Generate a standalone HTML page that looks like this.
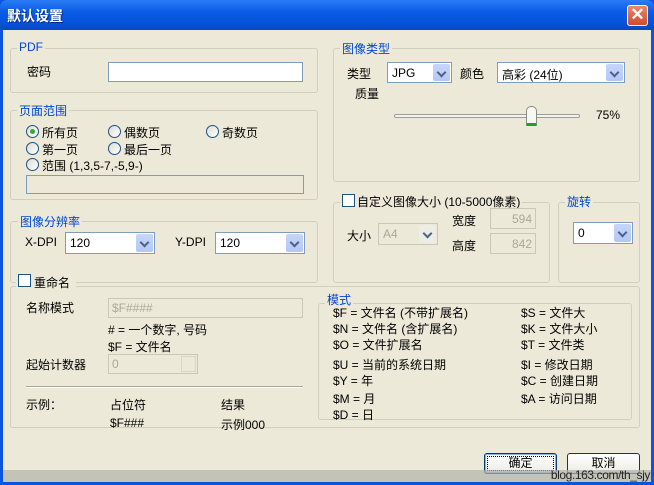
<!DOCTYPE html><html><head><meta charset="utf-8"><style>
*{margin:0;padding:0;box-sizing:border-box}
body{width:654px;height:485px;overflow:hidden;font-family:"Liberation Sans","Noto Sans CJK SC",sans-serif;font-size:12px;color:#000;background:#0a4fd8}
.win{position:absolute;left:0;top:0;width:654px;height:485px;background:#0a55e0;}
.title{position:absolute;left:0;top:0;width:654px;height:30px;background:linear-gradient(#2a7cf5,#0a5be6 40%,#0452d8 80%,#0847c0);border-radius:7px 7px 0 0}
.title span{position:absolute;left:7px;top:6px;color:#fff;font-weight:bold;font-size:14px;text-shadow:1px 1px #0a2a80}
.close{position:absolute;left:627px;top:5px;width:21px;height:21px;border:1px solid #fff;border-radius:3px;background:linear-gradient(#e88a6a,#d2492c);color:#fff;font-size:17px;line-height:18px;text-align:center;font-weight:bold}
.body{position:absolute;left:3px;top:30px;width:648px;height:452px;background:#ece9d8}
.a{position:absolute;white-space:nowrap}
.g{position:absolute;border:1px solid #d0d0bf;border-radius:3px}
.gl{position:absolute;background:#ece9d8;color:#0046d5;padding:0 2px;white-space:nowrap}
.inp{position:absolute;background:#fff;border:1px solid #7f9db9}
.dis{background:#ece9d8;border-color:#c9c7ba;color:#aca899}
.cb{position:absolute;background:#fff;border:1px solid #7f9db9}
.cb i{position:absolute;right:1px;top:1px;bottom:1px;width:17px;background:linear-gradient(#c6d5fb,#b4c8f6);border-radius:2px}
.cb i:after{content:"";position:absolute;left:5px;top:5px;width:5px;height:5px;border-right:2px solid #4d6185;border-bottom:2px solid #4d6185;transform:rotate(45deg)}
.cb span{position:absolute;left:4px;top:3px}
.r{position:absolute;width:13px;height:13px;border:1px solid #1c5180;border-radius:50%;background:linear-gradient(135deg,#dcdcd6,#fff)}
.ck{position:absolute;width:13px;height:13px;border:1px solid #1c5180;background:#fff}
.btn{position:absolute;border:1px solid #003c74;border-radius:3px;background:linear-gradient(#fff,#f0f0ea 80%,#d6d0c5);text-align:center;line-height:19px;font-size:12px}
</style></head><body><div class="win">
<div class="title"><span>默认设置</span><div class="close">✕</div></div>
<div class="body"></div>

<div class="g" style="left:10px;top:48px;width:308px;height:45px"></div><div class="gl" style="left:17px;top:40px">PDF</div>
<div class="a" style="left:27px;top:63px">密码</div>
<div class="inp" style="left:108px;top:62px;width:195px;height:20px"></div>

<div class="g" style="left:10px;top:110px;width:308px;height:90px"></div><div class="gl" style="left:17px;top:102px">页面范围</div>
<div class="r" style="left:26px;top:125px"><div style="position:absolute;left:3px;top:3px;width:5px;height:5px;border-radius:50%;background:#3a3"></div></div><div class="a" style="left:42px;top:124px">所有页</div>
<div class="r" style="left:108px;top:125px"></div><div class="a" style="left:124px;top:124px">偶数页</div>
<div class="r" style="left:206px;top:125px"></div><div class="a" style="left:222px;top:124px">奇数页</div>
<div class="r" style="left:26px;top:142px"></div><div class="a" style="left:42px;top:141px">第一页</div>
<div class="r" style="left:108px;top:142px"></div><div class="a" style="left:124px;top:141px">最后一页</div>
<div class="r" style="left:26px;top:158px"></div><div class="a" style="left:42px;top:157px">范围 (1,3,5-7,-5,9-)</div>
<div class="inp" style="left:26px;top:175px;width:278px;height:19px;background:#ece9d8"></div>

<div class="g" style="left:10px;top:221px;width:308px;height:62px"></div><div class="gl" style="left:18px;top:213px">图像分辨率</div>
<div class="a" style="left:25px;top:235px">X-DPI</div>
<div class="cb" style="left:65px;top:232px;width:90px;height:22px"><span>120</span><i></i></div>
<div class="a" style="left:175px;top:235px">Y-DPI</div>
<div class="cb" style="left:215px;top:232px;width:90px;height:22px"><span>120</span><i></i></div>

<div class="g" style="left:333px;top:48px;width:307px;height:134px"></div><div class="gl" style="left:340px;top:40px">图像类型</div>
<div class="a" style="left:347px;top:65px">类型</div>
<div class="cb" style="left:387px;top:62px;width:65px;height:21px"><span>JPG</span><i></i></div>
<div class="a" style="left:460px;top:65px">颜色</div>
<div class="cb" style="left:497px;top:62px;width:128px;height:21px"><span>高彩 (24位)</span><i></i></div>
<div class="a" style="left:355px;top:85px">质量</div>
<div style="position:absolute;left:394px;top:114px;width:186px;height:4px;border:1px solid #9d9c99;background:#f3f3f3;border-radius:2px"></div>
<div style="position:absolute;left:526px;top:106px;width:11px;height:20px;background:#f7f7f4;border:1px solid #8a8a80;border-bottom:3px solid #21a121;border-radius:5px 5px 1px 1px"></div>
<div class="a" style="left:596px;top:108px">75%</div>

<div class="g" style="left:333px;top:202px;width:217px;height:81px"></div>
<div class="a" style="left:340px;top:193px;background:#ece9d8;padding:0 2px 0 17px">自定义图像大小 (10-5000像素)</div><div class="ck" style="left:342px;top:194px"></div>
<div class="a" style="left:347px;top:227px">大小</div>
<div class="cb" style="left:378px;top:223px;width:60px;height:22px;background:#ece9d8;border-color:#c9c7ba"><span style="color:#aca899">A4</span><i style="background:#eeede5"></i></div>
<div class="a" style="left:452px;top:212px">宽度</div>
<div class="inp dis" style="left:490px;top:208px;width:46px;height:21px;text-align:right;padding:3px 3px">594</div>
<div class="a" style="left:452px;top:237px">高度</div>
<div class="inp dis" style="left:490px;top:233px;width:46px;height:21px;text-align:right;padding:3px 3px">842</div>

<div class="g" style="left:558px;top:202px;width:82px;height:81px"></div><div class="gl" style="left:565px;top:193px">旋转</div>
<div class="cb" style="left:573px;top:222px;width:60px;height:22px"><span>0</span><i></i></div>

<div class="g" style="left:10px;top:286px;width:630px;height:142px"></div>
<div class="a" style="left:16px;top:274px;background:#ece9d8;padding:0 6px 0 18px">重命名</div><div class="ck" style="left:18px;top:274px"></div>
<div class="a" style="left:26px;top:299px">名称模式</div>
<div class="inp dis" style="left:108px;top:298px;width:195px;height:20px;padding:2px 3px">$F####</div>
<div class="a" style="left:108px;top:321px">#  = 一个数字, 号码</div>
<div class="a" style="left:108px;top:338px">$F = 文件名</div>
<div class="a" style="left:26px;top:356px">起始计数器</div>
<div class="inp dis" style="left:108px;top:354px;width:90px;height:20px;padding:2px 3px">0<div style="position:absolute;right:1px;top:1px;width:15px;height:16px;border:1px solid #d8d6cc"></div></div>
<div style="position:absolute;left:26px;top:386px;width:277px;height:2px;border-top:1px solid #aca899;border-bottom:1px solid #fff"></div>
<div class="a" style="left:26px;top:396px">示例：</div>
<div class="a" style="left:110px;top:396px">占位符</div>
<div class="a" style="left:221px;top:396px">结果</div>
<div class="a" style="left:110px;top:416px">$F###</div>
<div class="a" style="left:221px;top:416px">示例000</div>

<div class="g" style="left:318px;top:303px;width:314px;height:117px"></div><div class="gl" style="left:325px;top:291px">模式</div>
<div class="a" style="left:333px;top:305px;line-height:16px">$F = 文件名 (不带扩展名)<br>$N = 文件名 (含扩展名)<br>$O = 文件扩展名<br><span style="display:block;margin-top:4px">$U = 当前的系统日期</span>$Y = 年<br><span style="display:block;margin-top:2px">$M = 月</span>$D = 日</div>
<div class="a" style="left:521px;top:305px;line-height:16px">$S = 文件大<br>$K = 文件大小<br>$T = 文件类<br><span style="display:block;margin-top:4px">$I = 修改日期</span>$C = 创建日期<br><span style="display:block;margin-top:2px">$A = 访问日期</span></div>

<div class="btn" style="left:484px;top:453px;width:73px;height:21px;outline:1px dotted #000;outline-offset:-4px;box-shadow:inset 0 0 0 1px #8db2e3">确定</div>
<div class="btn" style="left:567px;top:453px;width:73px;height:21px">取消</div>
<div style="position:absolute;left:3px;top:470px;width:648px;height:12px;background:rgba(180,178,170,.7)"></div>
<div class="a" style="right:4px;top:468px;font-size:12px;color:#222;letter-spacing:-0.4px">blog.163.com/th_sjy</div>
</div></body></html>
